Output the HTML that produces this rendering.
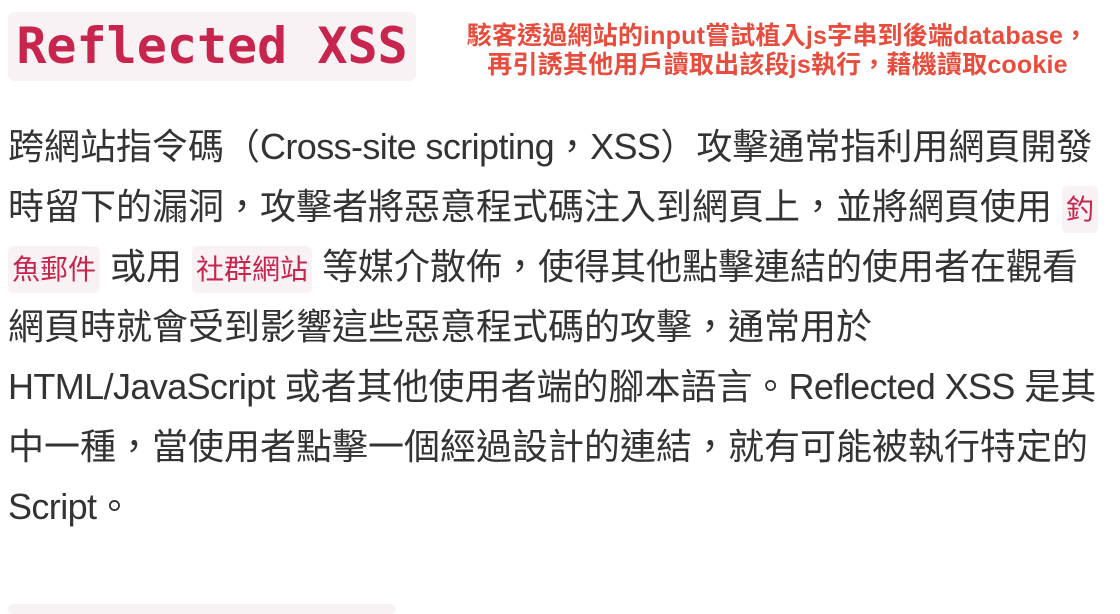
<!DOCTYPE html>
<html><head><meta charset="utf-8"><style>
body{margin:0;background:#fff;width:1120px;height:610px;overflow:hidden;position:relative;font-family:"Liberation Sans","Noto Sans CJK TC",sans-serif;}
.t{position:absolute;left:8px;top:12px;width:408px;height:69px;background:#f9f2f4;border-radius:7px;color:#c7254e;font:bold 50px/69px "DejaVu Sans Mono","Liberation Mono",monospace;text-align:center}
.n{position:absolute;left:455px;top:22px;width:645px;color:#e74c3c;font:bold 25px/29px "Liberation Sans","Noto Sans CJK TC",sans-serif;text-align:center;letter-spacing:0.2px}
.p{position:absolute;left:8px;top:117px;color:#333;font-size:36px}
.p div{height:60px;line-height:60px;white-space:nowrap}
.l{letter-spacing:-0.6px}
code{font-family:"Liberation Sans","Noto Sans CJK TC",sans-serif;font-size:28px;color:#c7254e;background:#f9f2f4;border-radius:6px;padding:8px 4px}
.b{position:absolute;left:8px;top:604px;width:388px;height:10px;background:#f9f2f4;border-radius:5px}
</style></head><body>
<div class="t">Reflected XSS</div>
<div class="n">駭客透過網站的input嘗試植入js字串到後端database，<br>再引誘其他用戶讀取出該段js執行，藉機讀取cookie</div>
<div class="p">
<div>跨網站指令碼（<span class="l">Cross-site scripting</span>，<span class="l">XSS</span>）攻擊通常指利用網頁開發</div>
<div>時留下的漏洞，攻擊者將惡意程式碼注入到網頁上，並將網頁使用 <code>釣</code></div>
<div><code>魚郵件</code> 或用 <code>社群網站</code> 等媒介散佈，使得其他點擊連結的使用者在觀看</div>
<div>網頁時就會受到影響這些惡意程式碼的攻擊，通常用於</div>
<div><span class="l">HTML/JavaScript </span>或者其他使用者端的腳本語言。<span class="l">Reflected XSS </span>是其</div>
<div>中一種，當使用者點擊一個經過設計的連結，就有可能被執行特定的</div>
<div><span class="l">Script</span>。</div>
</div>
<div class="b"></div>
</body></html>
